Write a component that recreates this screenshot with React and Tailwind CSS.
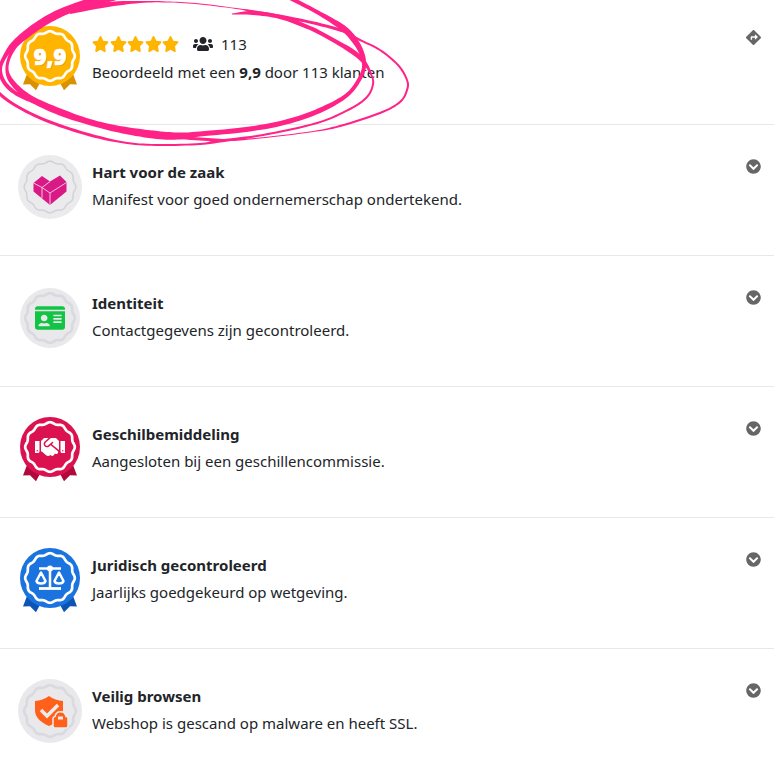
import { FaChevronCircleDown, FaDirections, FaHandshake, FaIdCard, FaStar, FaUsers } from "react-icons/fa";

const checks = [
  { id: "hart", title: "Hart voor de zaak", text: "Manifest voor goed ondernemerschap ondertekend." },
  { id: "identiteit", title: "Identiteit", text: "Contactgegevens zijn gecontroleerd." },
  { id: "geschil", title: "Geschilbemiddeling", text: "Aangesloten bij een geschillencommissie." },
  { id: "juridisch", title: "Juridisch gecontroleerd", text: "Jaarlijks goedgekeurd op wetgeving." },
  { id: "veilig", title: "Veilig browsen", text: "Webshop is gescand op malware en heeft SSL." },
];

// scalloped ring around (32, cy)
const wave = (cy, r, depth, bumps = 12) => {
  const pts = [];
  for (let i = 0; i < 280; i++) {
    const a = (i / 280) * Math.PI * 2;
    const rad = r + depth * Math.cos(bumps * a);
    pts.push(`${(32 + rad * Math.sin(a)).toFixed(2)} ${(cy - rad * Math.cos(a)).toFixed(2)}`);
  }
  return `M${pts.join("L")}Z`;
};

function Badge({ color, ribbon, ring = "#fff", ringWidth = 2.7, r = 30, children }) {
  const cy = ribbon ? 30 : 32;
  return (
    <svg viewBox="0 0 64 68" className="w-16 h-17 shrink-0" aria-hidden="true">
      {ribbon && (
        <path fill={ribbon} d="M9 48 5 58.500l7-.2 6 6L24 53ZM55 48l4 10.500-7-.2-6 6L40 53Z" />
      )}
      <circle cx="32" cy={cy} r={r} fill={color} />
      <path d={wave(cy, r === 32 ? 25 : 24, 0.8)} fill="none" stroke={ring} strokeWidth={ringWidth} />
      {children}
    </svg>
  );
}

const badges = {
  hart: (
    <Badge color="#ebebed" ring="#d2d2d6" ringWidth={1.5} r={32}>
      <path fill="#d91a86" d="M15.500 28 24 21l8 5.500L42 20.500l6.500 6.500v9.500L32 50 15.500 36.500Z" />
      <path fill="none" stroke="#f3c3df" strokeWidth="1" d="m15.500 28 8.500 4.500 8-6M24 32.500V43M24 32.500l8 5.500 16.500-10.500M32 38v12" />
    </Badge>
  ),
  identiteit: (
    <Badge color="#e9e9ec" ring="#d9d9df">
      <FaIdCard x="17" y="18.5" className="w-[30px] h-[27px]" color="#12c443" />
    </Badge>
  ),
  geschil: (
    <Badge color="#dc1250" ribbon="#b00a3c">
      <FaHandshake x="17" y="18" className="w-[30px] h-6" color="#fff" />
    </Badge>
  ),
  juridisch: (
    <Badge color="#1a73df" ribbon="#0d55b5">
      <g fill="none" stroke="#fff" strokeWidth="2.500" strokeLinejoin="round">
        <path d="M21 20.500h22M32 20.500V41" />
        <path d="M21 40.500h22" strokeWidth="2.800" />
        <path d="m23 24.500-4.500 8.500q.5 2.500 4.500 2.500t4.500-2.500ZM41 24.500l-4.500 8.500q.5 2.500 4.500 2.500t4.500-2.500Z" />
      </g>
      <circle cx="32" cy="20.5" r="3" fill="#fff" />
    </Badge>
  ),
  veilig: (
    <Badge color="#e9e9ec" ring="#d9d9df" r={32}>
      <path fill="#ff611a" d="M31 17c4 3 9 4.500 14 5v9c0 7-5 12-14 16-9-4-14-9-14-16v-9c5-.5 10-2 14-5Z" />
      <path fill="none" stroke="#ececef" strokeWidth="3.500" d="m23 31 6 6L40 26" />
      <path fill="#ff611a" stroke="#ececef" strokeWidth="1.500" d="M35 39q0-1 2-1.500c1-6.500 10-6.500 11 0q2 .5 2 1.500v8q0 2-2 2H37q-2 0-2-2Z" />
      <path fill="#ececef" d="M40 37.500h5v3h-5Z" />
    </Badge>
  ),
};

// Outline of a brush stroke; every point is [x, y, width]
const brush = (points) => {
  const left = [];
  const right = [];
  const mix = (a, b, c, d, t) =>
    0.5 * (2 * b + (c - a) * t + (2 * a - 5 * b + 4 * c - d) * t * t + (3 * b - a - 3 * c + d) * t * t * t);
  const line = [];
  for (let i = 0; i < points.length - 1; i++) {
    const p = [points[Math.max(i - 1, 0)], points[i], points[i + 1], points[Math.min(i + 2, points.length - 1)]];
    for (let s = 0; s < 8; s++) {
      line.push([0, 1, 2].map((k) => mix(p[0][k], p[1][k], p[2][k], p[3][k], s / 8)));
    }
  }
  line.push(points[points.length - 1]);
  line.forEach(([x, y, w], i) => {
    const a = line[Math.max(i - 1, 0)];
    const b = line[Math.min(i + 1, line.length - 1)];
    const len = Math.hypot(b[0] - a[0], b[1] - a[1]) || 1;
    const nx = (-(b[1] - a[1]) / len) * (w / 2);
    const ny = ((b[0] - a[0]) / len) * (w / 2);
    left.push(`${(x + nx).toFixed(1)} ${(y + ny).toFixed(1)}`);
    right.unshift(`${(x - nx).toFixed(1)} ${(y - ny).toFixed(1)}`);
  });
  return `M${left.concat(right).join("L")}Z`;
};

const strokes = [
  [[288, -3, 4], [317, 12, 4], [343, 28, 6], [355, 41, 6], [362, 54, 5], [364, 67, 4], [359, 80, 4], [347, 95, 4], [323, 109, 5], [290, 121, 5], [250, 129, 5], [200, 134, 5], [180, 136, 7], [157, 135, 8], [123, 130, 7], [93, 123, 6], [60, 112, 7], [30, 98, 6], [12, 82, 5], [7, 67, 3], [14, 48, 4], [30, 32, 7], [50, 19, 7], [73, 9, 6], [98, 2, 6], [118, -3, 5]],
  [[232, 14, 1], [253, 13, 4], [280, 17, 4], [310, 28, 4], [333, 40, 4], [353, 52, 5], [364, 62, 4], [371, 74, 2], [373, 84, 2], [367, 97, 2], [350, 109, 2], [317, 123, 2], [263, 135, 2], [220, 141, 3], [200, 144, 2], [160, 145, 2], [127, 143, 2], [90, 135, 3], [50, 122, 3], [20, 108, 3], [0, 94, 3], [-8, 80, 2]],
  [[100, -3, 5], [60, 12, 6], [35, 27, 7], [15, 43, 6], [4, 58, 4], [0, 70, 4], [4, 82, 4], [14, 92, 4], [30, 100, 4], [50, 108, 3]],
  [[70, 13, 2], [105, 5, 5], [140, 2, 2], [170, 2, 1], [200, 4, 1], [240, 9, 1], [255, 12, 3], [300, 20, 3], [340, 30, 3], [360, 40, 2], [380, 50, 2], [398, 65, 2], [407, 80, 2], [407, 90, 2], [400, 102, 2], [380, 113, 2], [340, 126, 2], [310, 132, 1], [260, 138, 1], [230, 140, 2], [200, 139, 3], [165, 136, 3]],
];

export default function App() {
  return (
    <main className="relative w-full overflow-hidden bg-white text-[#212529] text-[15px] leading-7 font-['Noto_Sans','Open_Sans',sans-serif]">
      <section className="flex items-start gap-[10px] pl-[18px] pr-[13px] pt-[26px] pb-[30px] border-b border-[#e8e8e8]">
        <Badge color="#ffb400" ribbon="#d89100">
          <text x="33" y="40" textAnchor="middle" fontSize="22" fontWeight="900" fill="#c98600" opacity="0.5">9,9</text>
          <text x="32" y="39" textAnchor="middle" fontSize="22" fontWeight="900" fill="#fff" stroke="#fff" strokeWidth="0.7">9,9</text>
        </Badge>
        <div className="flex-1 pt-1">
          <div className="flex items-center">
            <span className="flex justify-between w-[87px]" role="img" aria-label="5 sterren">
              {[1, 2, 3, 4, 5].map((n) => (
                <FaStar key={n} className="w-[17px] h-4 text-[#ffb400]" preserveAspectRatio="none" />
              ))}
            </span>
            <FaUsers className="ml-[14px] mr-2 w-5 h-5" />
            <span>113</span>
          </div>
          <p>Beoordeeld met een <b>9,9</b> door 113 klanten</p>
        </div>
        <a href="#reviews" aria-label="Bekijk beoordelingen" className="mt-1 text-[#666]">
          <FaDirections className="size-[15px]" />
        </a>
      </section>

      {checks.map((check) => (
        <section key={check.id} className="flex items-start gap-[10px] pl-[18px] pr-[13px] pt-[30px] pb-8 border-b border-[#e8e8e8] last-of-type:border-b-0 last-of-type:pb-6">
          {badges[check.id]}
          <div className="flex-1 pt-1 leading-[27px]">
            <h2 className="font-bold">{check.title}</h2>
            <p>{check.text}</p>
          </div>
          <button type="button" aria-label={`Meer over ${check.title}`} className="mt-1 text-[#666]">
            <FaChevronCircleDown className="size-[15px]" />
          </button>
        </section>
      ))}

      <svg width="420" height="155" viewBox="0 0 420 155" className="absolute top-0 left-0 pointer-events-none" fill="#ff2388" aria-hidden="true">
        {strokes.map((points, i) => (
          <path key={i} d={brush(points)} />
        ))}
      </svg>
    </main>
  );
}
